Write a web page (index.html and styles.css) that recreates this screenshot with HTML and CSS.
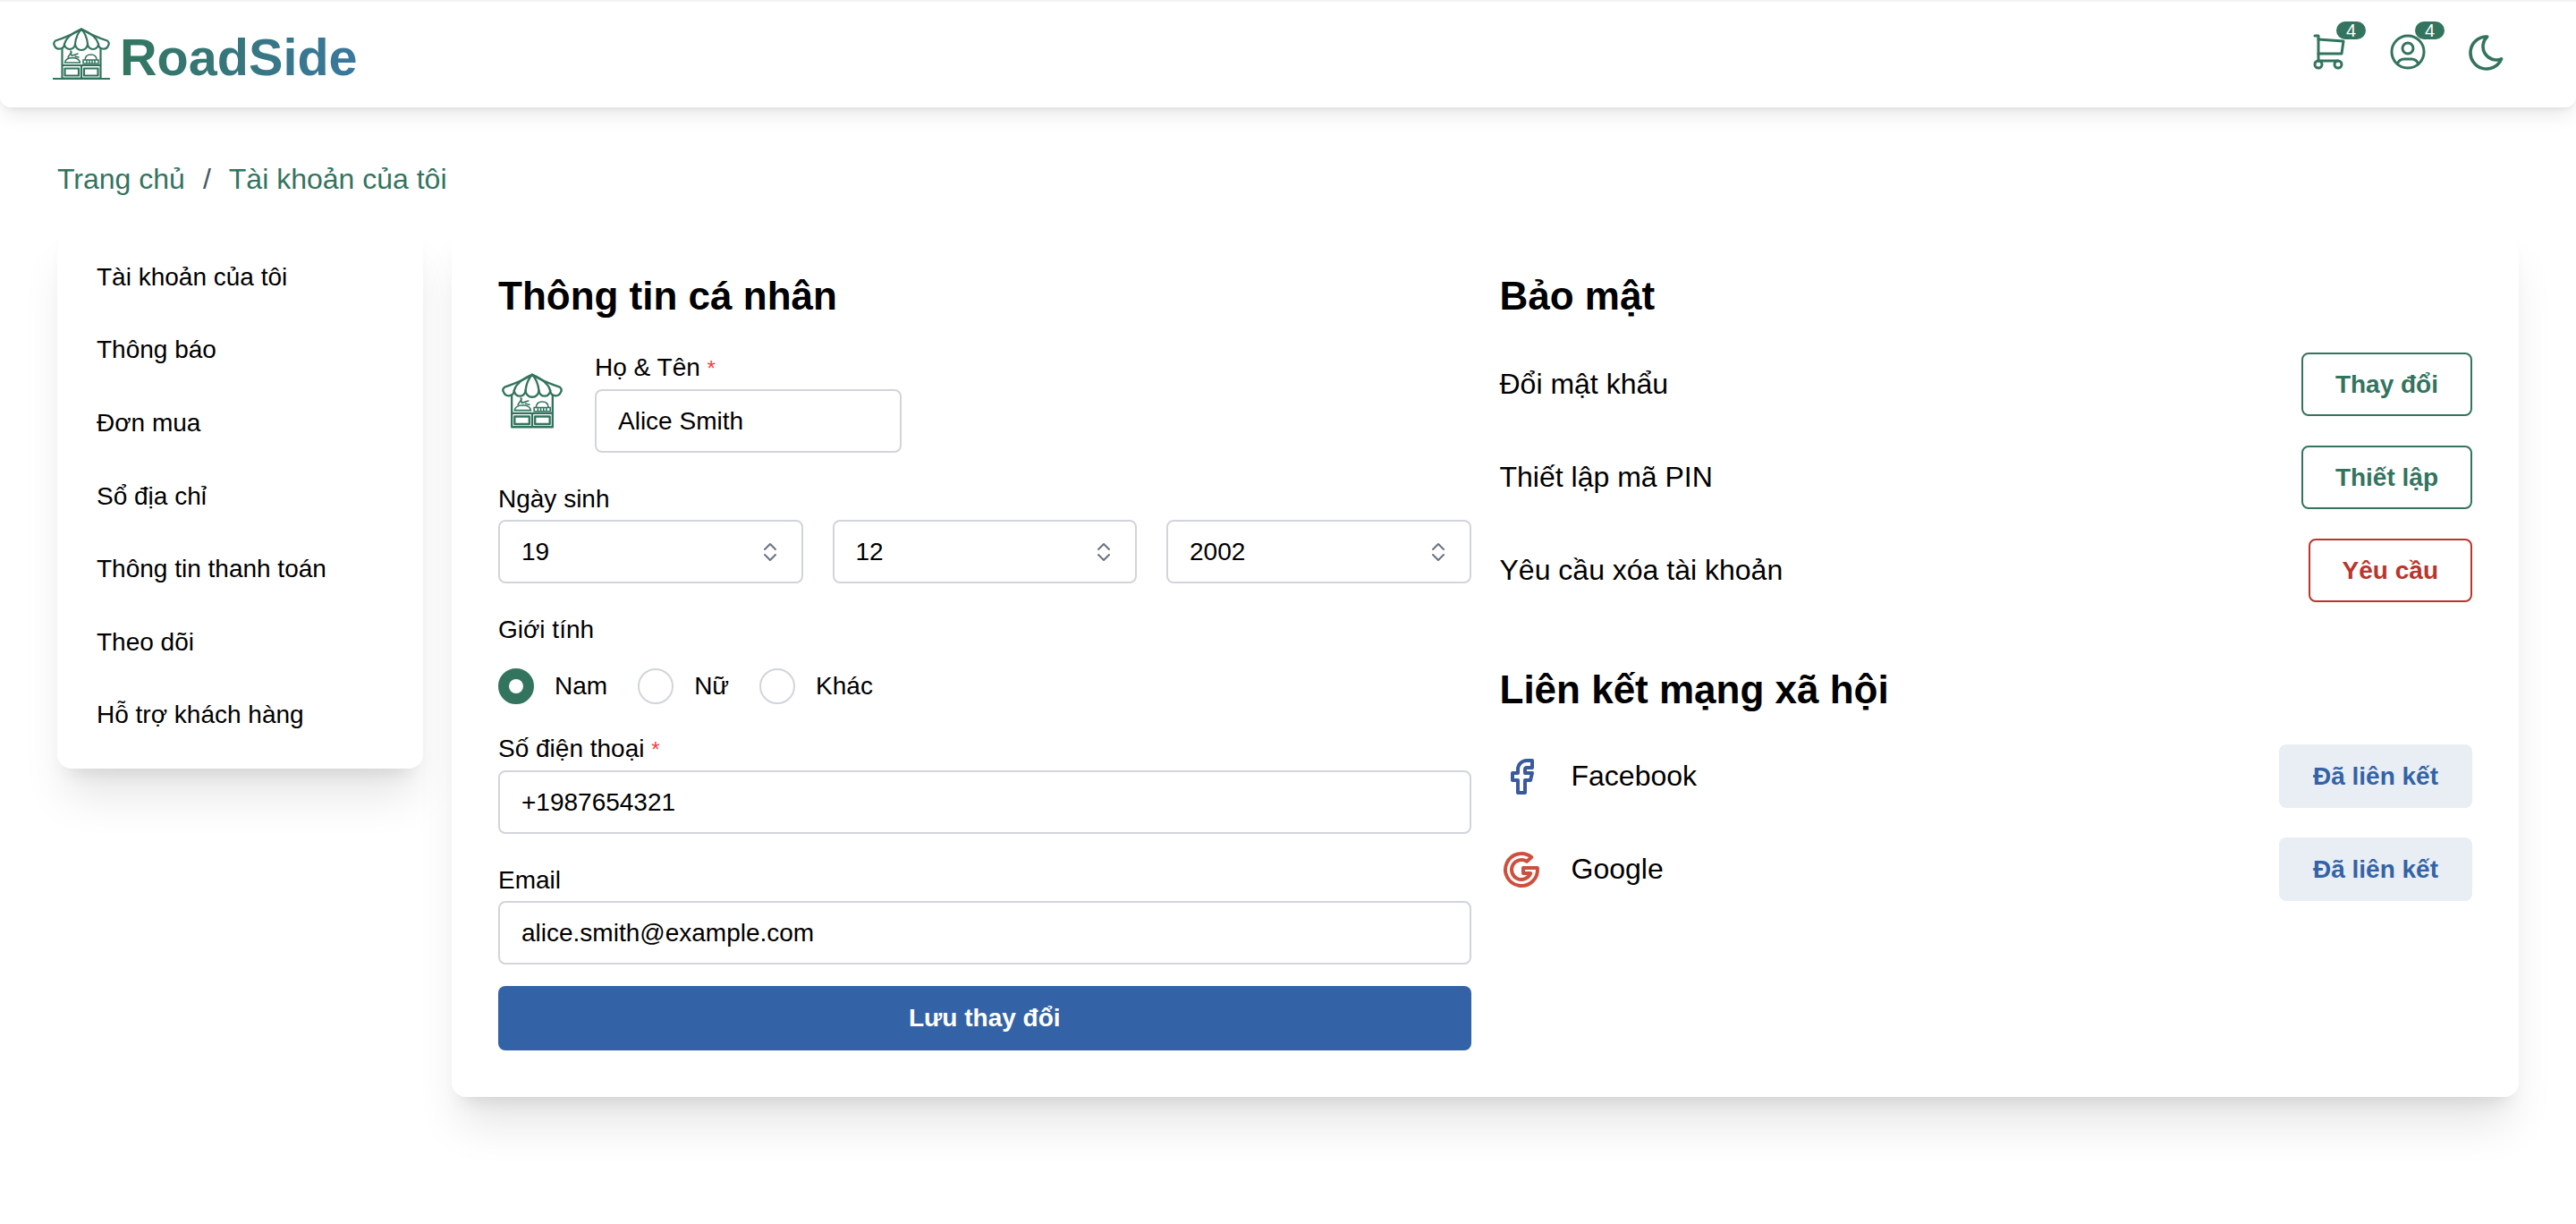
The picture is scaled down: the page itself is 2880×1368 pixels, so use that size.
FILE: index.html
```html
<!DOCTYPE html>
<html lang="vi">
<head>
    <meta charset="UTF-8" />
    <title>RoadSide - Tài khoản của tôi</title>
    <link rel="stylesheet" href="styles.css">
</head>
<body>

<svg class="sprite" width="0" height="0">
    <symbol id="stall" viewBox="0 0 64 58">
        <g fill="none" stroke="currentColor" stroke-width="2.2" stroke-linejoin="round" stroke-linecap="round">
            <!-- awning -->
            <path d="M3 14.5Q0 17 2 20A5.7 5.7 0 0 0 13 18A6 6 0 0 0 25 18A7 7 0 0 0 39 18A6 6 0 0 0 51 18A5.7 5.7 0 0 0 62 20Q64 17 61 14.5Q44 9 32 1.5Q20 9 3 14.5Z" />
            <path d="M32 1.5Q16 8 13 18M32 1.5Q26 8 25 18M32 1.5Q38 8 39 18M32 1.5Q48 8 51 18" />
            <!-- posts and counter -->
            <path d="M10.5 23V56.5H53.5V23M10.5 42H53.5M32 42V56.5" />
            <rect x="13.5" y="45.5" width="15.5" height="8" />
            <rect x="35" y="45.5" width="15.5" height="8" />
        </g>
        <!-- goods on the counter -->
        <g fill="none" stroke="currentColor" stroke-width="1.5" stroke-linecap="round">
            <path d="M13.5 39Q14 34 22 33.5Q30 34 30.5 39ZM17 33L21 27M21 31L20 26M22 31L28 29M25 32L29 33" />
            <path d="M34 36H51V40H34ZM36 36Q36.5 30 42.5 30Q49 30 49 36M38 36V40M41 36V40M44 36V40M47 36V40" />
        </g>
    </symbol>
</svg>

<header class="topbar">
    <a class="brand" href="#">
        <span class="brand-icon">
            <svg class="brand-stall"><use href="#stall" /></svg>
            <span class="brand-ground"></span>
        </span>
        <span class="brand-name">RoadSide</span>
    </a>
    <nav class="topbar-icons">
        <a class="icon-link" href="#">
            <svg viewBox="0 0 24 24"><path d="M6 19m-2 0a2 2 0 1 0 4 0a2 2 0 1 0 -4 0" /><path d="M17 19m-2 0a2 2 0 1 0 4 0a2 2 0 1 0 -4 0" /><path d="M17 17h-11v-14h-2" /><path d="M6 5l14 1l-1 7h-13" /></svg>
            <span class="badge">4</span>
        </a>
        <a class="icon-link" href="#">
            <svg viewBox="0 0 24 24"><path d="M12 12m-9 0a9 9 0 1 0 18 0a9 9 0 1 0 -18 0" /><path d="M12 10m-3 0a3 3 0 1 0 6 0a3 3 0 1 0 -6 0" /><path d="M6.168 18.849a4 4 0 0 1 3.832 -2.849h4a4 4 0 0 1 3.834 2.855" /></svg>
            <span class="badge">4</span>
        </a>
        <a class="icon-link icon-moon" href="#">
            <svg viewBox="0 0 24 24"><path d="M12 3c.132 0 .263 0 .393 0a7.5 7.5 0 0 0 7.92 12.446a9 9 0 1 1 -8.313 -12.454z" /></svg>
        </a>
    </nav>
</header>

<main class="page">
    <div class="breadcrumb">
        <a href="#">Trang chủ</a>
        <span class="crumb-sep">/</span>
        <a href="#">Tài khoản của tôi</a>
    </div>

    <div class="account">
        <aside class="sidebar">
            <a href="#">Tài khoản của tôi</a>
            <a href="#">Thông báo</a>
            <a href="#">Đơn mua</a>
            <a href="#">Sổ địa chỉ</a>
            <a href="#">Thông tin thanh toán</a>
            <a href="#">Theo dõi</a>
            <a href="#">Hỗ trợ khách hàng</a>
        </aside>

        <section class="panel">
            <form class="profile">
                <h2>Thông tin cá nhân</h2>

                <div class="name-row">
                    <svg class="avatar"><use href="#stall" /></svg>
                    <div class="name-field">
                        <label for="fullName">Họ &amp; Tên <span class="req">*</span></label>
                        <input type="text" id="fullName" value="Alice Smith" />
                    </div>
                </div>

                <div class="field">
                    <label>Ngày sinh</label>
                    <div class="date-row">
                        <select><option>19</option></select>
                        <select><option>12</option></select>
                        <select><option>2002</option></select>
                    </div>
                </div>

                <div class="field gender">
                    <label>Giới tính</label>
                    <div class="radio-row">
                        <label class="radio"><input type="radio" name="gender" checked /> Nam</label>
                        <label class="radio"><input type="radio" name="gender" /> Nữ</label>
                        <label class="radio"><input type="radio" name="gender" /> Khác</label>
                    </div>
                </div>

                <div class="field">
                    <label for="phone">Số điện thoại <span class="req">*</span></label>
                    <input type="text" id="phone" value="+1987654321" />
                </div>

                <div class="field">
                    <label for="email">Email</label>
                    <input type="text" id="email" value="alice.smith@example.com" />
                </div>

                <button type="button" class="save-btn">Lưu thay đổi</button>
            </form>

            <div class="settings">
                <h2>Bảo mật</h2>
                <div class="security-row">
                    <span>Đổi mật khẩu</span>
                    <button type="button" class="btn btn-green">Thay đổi</button>
                </div>
                <div class="security-row">
                    <span>Thiết lập mã PIN</span>
                    <button type="button" class="btn btn-green">Thiết lập</button>
                </div>
                <div class="security-row">
                    <span>Yêu cầu xóa tài khoản</span>
                    <button type="button" class="btn btn-red">Yêu cầu</button>
                </div>

                <h2 class="social-title">Liên kết mạng xã hội</h2>
                <div class="social-row">
                    <span class="social-name">
                        <svg class="fb" viewBox="0 0 24 24"><path d="M7 10v4h3v7h4v-7h3l1 -4h-4v-2a1 1 0 0 1 1 -1h3v-4h-3a5 5 0 0 0 -5 5v2h-3" /></svg>
                        Facebook
                    </span>
                    <button type="button" class="btn btn-linked">Đã liên kết</button>
                </div>
                <div class="social-row">
                    <span class="social-name">
                        <svg class="gg" viewBox="0 0 24 24"><path d="M20.945 11a9 9 0 1 1 -3.284 -5.997l-2.655 2.392a5.5 5.5 0 1 0 2.119 6.605h-4.125v-3h7.945z" /></svg>
                        Google
                    </span>
                    <button type="button" class="btn btn-linked">Đã liên kết</button>
                </div>
            </div>
        </section>
    </div>
</main>

</body>
</html>
```

FILE: styles.css
```css
* {
    box-sizing: border-box;
}
body {
    margin: 0;
    min-height: 1368px;
    background: #fff;
    color: #000;
    border-top: 2px solid #f3f3f3;
    font-family: "Liberation Sans", Arial, sans-serif;
    font-size: 28px;
}
a {
    color: inherit;
    text-decoration: none;
}
.sprite {
    position: absolute;
}

/* top bar */
.topbar {
    height: 118px;
    padding: 0 76px 0 59px;
    display: flex;
    align-items: center;
    justify-content: space-between;
    background: #fff;
    border-radius: 0 0 12px 12px;
    box-shadow: 0 12px 22px -4px rgba(0, 0, 0, 0.09), 0 4px 8px -4px rgba(0, 0, 0, 0.1);
}
.brand {
    display: flex;
    align-items: center;
    gap: 11px;
}
.brand-icon {
    width: 64px;
    height: 58px;
    margin-top: -2px;
    position: relative;
    color: #33745f;
}
.brand-stall {
    width: 64px;
    height: 58px;
    display: block;
}
.brand-ground {
    position: absolute;
    left: 0;
    right: 0;
    bottom: 0;
    height: 2px;
    background: #33745f;
}
.brand-name {
    padding-top: 6px;
    font-size: 57.6px;
    font-weight: 700;
    line-height: 64px;
    background: linear-gradient(90deg, #33765f, #3a789e);
    -webkit-background-clip: text;
    background-clip: text;
    color: transparent;
}
.topbar-icons {
    display: flex;
    gap: 40px;
    margin-top: -7px;
}
.icon-link {
    width: 48px;
    height: 48px;
    position: relative;
    display: block;
}
.icon-link svg {
    width: 48px;
    height: 48px;
    display: block;
    fill: none;
    stroke: #33745f;
    stroke-width: 1.5;
    stroke-linecap: round;
    stroke-linejoin: round;
}
.icon-moon {
    top: 1px;
}
.icon-moon svg {
    stroke-width: 1.8;
}
.badge {
    position: absolute;
    top: -10px;
    left: 32px;
    width: 33px;
    height: 20px;
    border-radius: 10px;
    background: #33745f;
    color: #fff;
    font-size: 20px;
    line-height: 20px;
    text-align: center;
}

/* page */
.page {
    padding: 56px 64px 0;
}
.breadcrumb {
    display: flex;
    gap: 20px;
    font-size: 32px;
    line-height: 48px;
    color: #33745f;
    margin-bottom: 24px;
}
.crumb-sep {
    color: #4b5563;
}
.account {
    display: flex;
    align-items: flex-start;
    gap: 32px;
}
.sidebar {
    width: 409px;
    flex-shrink: 0;
    padding: 21px 0 19px;
    background: #fff;
    border-radius: 16px;
    box-shadow: 0 40px 50px -10px rgba(0, 0, 0, 0.1), 0 16px 20px -12px rgba(0, 0, 0, 0.1);
}
.sidebar a {
    display: block;
    padding: 19.8px 44px;
    line-height: 42px;
}
.panel {
    flex: 1;
    padding: 52px;
    display: grid;
    grid-template-columns: 1fr 1fr;
    gap: 32px;
    background: #fff;
    border-radius: 16px;
    box-shadow: 0 40px 50px -10px rgba(0, 0, 0, 0.1), 0 16px 20px -12px rgba(0, 0, 0, 0.1);
}
h2 {
    margin: 0;
    font-size: 44px;
    font-weight: 700;
    line-height: 62px;
}

/* profile form */
.profile h2 {
    margin-bottom: 28px;
}
label {
    display: block;
    line-height: 42px;
    margin-bottom: 2px;
}
.req {
    color: #ef4444;
    font-size: 24px;
}
input[type="text"], select {
    display: block;
    width: 100%;
    height: 71px;
    padding: 0 24px;
    background-color: #fff;
    border: 2px solid #d1d5db;
    border-radius: 8px;
    color: #000;
    font-family: inherit;
    font-size: 28px;
}
select {
    appearance: none;
    background-image: url("data:image/svg+xml,%3Csvg xmlns='http://www.w3.org/2000/svg' viewBox='0 0 16 24' fill='none' stroke='%236b7280' stroke-width='2' stroke-linecap='round' stroke-linejoin='round'%3E%3Cpath d='M2 9l6-6 6 6M2 15l6 6 6-6'/%3E%3C/svg%3E");
    background-repeat: no-repeat;
    background-position: right 27px center;
    background-size: 16px 24px;
}
.name-row {
    display: flex;
    align-items: center;
}
.avatar {
    width: 68px;
    height: 62px;
    margin: 0 36px 0 4px;
    color: #33745f;
}
.name-field {
    width: 343px;
}
.field {
    margin-top: 31px;
}
.date-row {
    display: grid;
    grid-template-columns: repeat(3, 1fr);
    gap: 33px;
}
.gender {
    margin-bottom: -2px;
}
.gender > label {
    margin-bottom: 22px;
}
.radio-row {
    display: flex;
    gap: 34px;
}
.radio {
    display: flex;
    align-items: center;
    gap: 23px;
    margin: 0;
    line-height: 40px;
}
.radio input {
    appearance: none;
    width: 40px;
    height: 40px;
    margin: 0;
    border: 2px solid #d1d5db;
    border-radius: 50%;
    background: #fff;
}
.radio input:checked {
    border: 12px solid #33745f;
}
.save-btn {
    display: block;
    width: 100%;
    height: 72px;
    margin-top: 24px;
    border: 0;
    border-radius: 8px;
    background: #3363a6;
    color: #fff;
    font-family: inherit;
    font-size: 28px;
    font-weight: 700;
}

/* security and social */
.settings {
    font-size: 32px;
}
.settings h2 {
    margin-bottom: 32px;
}
.settings .social-title {
    margin: 67px 0 30px;
}
.security-row, .social-row {
    display: flex;
    align-items: center;
    justify-content: space-between;
    margin-bottom: 33px;
}
.btn {
    height: 71px;
    padding: 0 36px;
    background: #fff;
    border: 2px solid transparent;
    border-radius: 8px;
    font-family: inherit;
    font-size: 28px;
    font-weight: 700;
}
.btn-green {
    border-color: #33745f;
    color: #33745f;
}
.btn-red {
    border-color: #b9352d;
    color: #b9352d;
}
.btn-linked {
    background: #e9eef5;
    color: #3363a6;
}
.social-name {
    display: flex;
    align-items: center;
    gap: 32px;
}
.social-name svg {
    width: 48px;
    height: 48px;
    fill: none;
    stroke-width: 2;
    stroke-linecap: round;
    stroke-linejoin: round;
}
.fb {
    stroke: #3b5a9c;
}
.gg {
    stroke: #cf4f3f;
}
```
